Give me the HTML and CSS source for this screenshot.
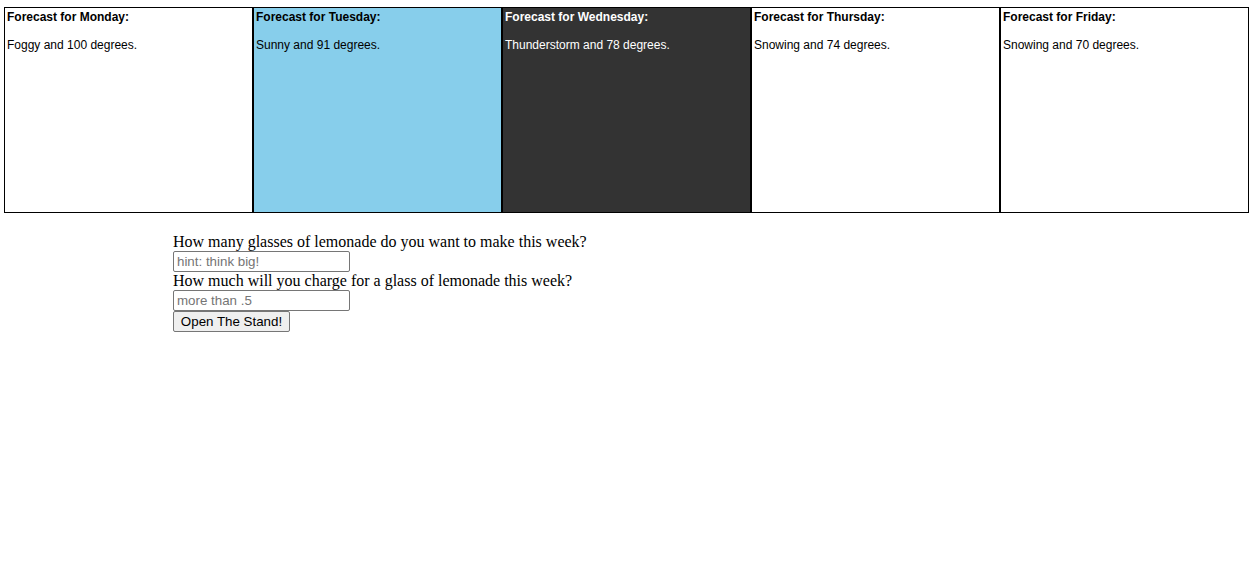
FILE: index.html
```html
<!DOCTYPE html>
<html>
<head>
<meta charset="utf-8">
<link rel="stylesheet" href="styles.css">
</head>
<body>
<div class="forecast">
  <div class="day">
    <h5 class="day-title">Forecast for Monday:</h5>
    <p class="day-text">Foggy and 100 degrees.</p>
  </div>
  <div class="day sunny">
    <h5 class="day-title">Forecast for Tuesday:</h5>
    <p class="day-text">Sunny and 91 degrees.</p>
  </div>
  <div class="day storm">
    <h5 class="day-title">Forecast for Wednesday:</h5>
    <p class="day-text">Thunderstorm and 78 degrees.</p>
  </div>
  <div class="day">
    <h5 class="day-title">Forecast for Thursday:</h5>
    <p class="day-text">Snowing and 74 degrees.</p>
  </div>
  <div class="day">
    <h5 class="day-title">Forecast for Friday:</h5>
    <p class="day-text">Snowing and 70 degrees.</p>
  </div>
</div>
<form class="stand">
  <label class="question">How many glasses of lemonade do you want to make this week?</label>
  <input class="field" type="text" placeholder="hint: think big!">
  <label class="question">How much will you charge for a glass of lemonade this week?</label>
  <input class="field" type="text" placeholder="more than .5">
  <button class="open" type="button">Open The Stand!</button>
</form>
</body>
</html>
```
FILE: styles.css
```css
body {
  margin: 0;
  font-family: "Liberation Serif", "Times New Roman", serif;
  background: #fff;
}
.forecast {
  display: flex;
  margin: 7px 4px 0 4px;
}
.day {
  box-sizing: border-box;
  width: 249px;
  height: 206px;
  border: 1px solid #000;
  padding: 2px 2px;
  font-family: "Liberation Sans", Arial, sans-serif;
  font-size: 12px;
  color: #000;
  background: #fff;
}
.day.sunny { background: #87ceeb; }
.day.storm { background: #333333; color: #fff; }
.day-title {
  margin: 0;
  font-size: 12px;
  font-weight: bold;
  line-height: 14px;
}
.day-text {
  margin: 14px 0 0 0;
  line-height: 14px;
}
.stand {
  display: flex;
  flex-direction: column;
  align-items: flex-start;
  margin: 20px 0 0 173px;
}
.question {
  font-size: 16px;
  line-height: 18px;
  color: #000;
}
.field {
  box-sizing: border-box;
  width: 177px;
  height: 21px;
  margin: 0;
  padding: 1px 3px;
  border: 1px solid #767676;
  border-radius: 2px;
  font-family: "Liberation Sans", Arial, sans-serif;
  font-size: 13.33px;
}
.field::placeholder { color: #757575; }
.open {
  box-sizing: border-box;
  margin: 0;
  height: 21px;
  width: 117px;
  padding: 1px 6px;
  border: 1px solid #767676;
  border-radius: 2px;
  background: #efefef;
  font-family: "Liberation Sans", Arial, sans-serif;
  font-size: 13.33px;
  color: #000;
}
```
